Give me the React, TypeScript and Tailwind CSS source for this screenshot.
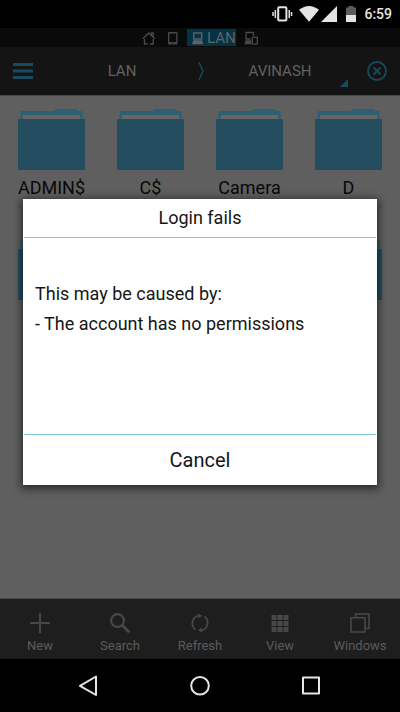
import type { ReactNode } from "react";

function Folder() {
  return (
    <svg viewBox="0 0 67 61" className="h-[61px] w-[67px]" aria-hidden="true">
      <path d="M2.500 11V3.200q0-1.200 1.200-1.200H36q.5-2 2-2h20q1.500 0 2 2h3.500q1.200 0 1.200 1.200V11z" fill="#2b6173" />
      <path d="M4.500 11 5 6h57l.5 5z" fill="#666" />
      <rect x="0" y="10" width="67" height="51" rx="1" fill="#244e60" />
    </svg>
  );
}

const namedFolders = ["ADMIN$", "C$", "Camera", "D"];
const coveredFolders = [5, 6, 7, 8];

function StatusBar() {
  return (
    <div className="flex h-7 items-center bg-black pr-2 text-sm font-medium text-[#e4e4e4]">
      <svg viewBox="0 0 86 20" className="ml-auto h-5 w-[86px]" fill="#e4e4e4" aria-hidden="true">
        <rect x="6.200" y="3.200" width="8.200" height="13.400" rx="1" fill="none" stroke="#e4e4e4" strokeWidth="2" />
        <path d="M.3 8h1.500v4H.3zM2.600 6h1.500v8H2.600zM16.500 6H18v8h-1.500zM18.800 8h1.500v4h-1.500z" />
        <path d="M27 5.800q10-7.600 20 0L37 17.800z" />
        <path d="M65 2v16H49z" />
        <path d="M74 3.500h2.500V2h5v1.500H84V12H74z" fill="#5c5c5c" />
        <path d="M74 11h10v7H74z" />
      </svg>
      <span className="ml-[6px] leading-7">6:59</span>
    </div>
  );
}

function LocationTabs() {
  return (
    <nav className="flex h-[19px] items-center justify-center bg-[#0a0a0a] text-[#494949]">
      <button type="button" aria-label="Home" className="w-[25px]">
        <svg viewBox="0 0 14 14" className="h-[14px] w-[14px]" fill="none" stroke="currentColor" strokeWidth="1.300" aria-hidden="true">
          <path d="M.8 7.800 6.800 2l6 5.800M2.500 8v5h3.200M8 13h3.200V8M9.500 4V2h1.800v3.500" />
        </svg>
      </button>
      <button type="button" aria-label="Device" className="w-5">
        <svg viewBox="0 0 12 14" className="h-[14px] w-3" aria-hidden="true">
          <path
            d="M2 1h7.500q1 0 1 1v10.500q0 1-1 1H2q-1 0-1-1V2q0-1 1-1zm.3 1.400v8.600h6.900V2.400zM5 11.700v.9h1.500v-.9z"
            fill="currentColor"
            fillRule="evenodd"
          />
        </svg>
      </button>
      <button type="button" className="flex h-[17px] w-[49px] items-center gap-[3px] bg-[#023346] pl-1 text-[15px] leading-4 text-[#626262]">
        <svg viewBox="0 0 13 14" className="h-[14px] w-[13px] shrink-0" fill="none" stroke="currentColor" strokeWidth="1.400" aria-hidden="true">
          <path d="M2.700 8V2h8v6z" />
          <path d="M2.200 9.300h9l1.100 3.900H1.100z" fill="currentColor" stroke="none" />
        </svg>
        LAN
      </button>
      <button type="button" aria-label="All locations" className="ml-2 w-[14px]">
        <svg viewBox="0 0 14 14" className="h-[14px] w-[14px]" fill="none" stroke="currentColor" strokeWidth="1.300" aria-hidden="true">
          <path d="M6.500 8H2V1.500h7.500V5" />
          <path d="M1.500 9.200h5.700v4H.5z" fill="currentColor" stroke="none" />
          <rect x="8.300" y="6.200" width="5" height="7" rx=".5" />
        </svg>
      </button>
    </nav>
  );
}

function PathBar() {
  return (
    <header className="flex h-12 items-center bg-[#141414] text-[15px] text-[#616161]">
      <button type="button" aria-label="Menu" className="w-[46px] pl-[13px]">
        <svg viewBox="0 0 20 16" className="h-4 w-5" fill="#164b60" aria-hidden="true">
          <path d="M0 0h20v3H0zM0 6.500h20v3H0zM0 13h20v3H0z" />
        </svg>
      </button>
      <button type="button" className="flex-1">LAN</button>
      <svg viewBox="0 0 6 18" className="h-[18px] w-[6px]" fill="none" stroke="#164b60" strokeWidth="1.400" aria-hidden="true">
        <path d="M1 .3 5 9 1 17.700" />
      </svg>
      <button type="button" className="relative h-12 flex-1">
        AVINASH
        <svg viewBox="0 0 8 8" className="absolute right-2 bottom-2 h-2 w-2" fill="#164b60" aria-hidden="true">
          <path d="M8 0v8H0z" />
        </svg>
      </button>
      <button type="button" aria-label="Close window" className="w-11 pl-[11px]">
        <svg viewBox="0 0 20 20" className="h-5 w-5" fill="none" stroke="#164b60" strokeWidth="1.800" aria-hidden="true">
          <circle cx="10" cy="10" r="9" />
          <path d="m6.500 6.500 7 7m0-7-7 7" />
        </svg>
      </button>
    </header>
  );
}

function ToolButton({ label, children }: { label: string; children: ReactNode }) {
  return (
    <button type="button" className="flex flex-col items-center pt-[14px] text-[13px] leading-[26px] text-[#5b5b5b]">
      <svg viewBox="0 0 20 20" className="h-5 w-5 text-[#484848]" fill="none" stroke="currentColor" strokeWidth="2" aria-hidden="true">
        {children}
      </svg>
      {label}
    </button>
  );
}

function Toolbar() {
  return (
    <footer className="grid h-[60px] grid-cols-5 bg-[#1e1e1e]">
      <ToolButton label="New">
        <path d="M10 0v20M0 10h20" />
      </ToolButton>
      <ToolButton label="Search">
        <circle cx="7.500" cy="7.500" r="6.400" strokeWidth="2.200" />
        <path d="m12 12 7.300 7.300" strokeWidth="3" />
      </ToolButton>
      <ToolButton label="Refresh">
        <path d="M5.500 16.600A8 8 0 0 1 8.500 2.500M14.500 3.400a8 8 0 0 1-3 14.100" strokeWidth="1.700" />
        <path d="m7.500.3 4.500 2.400-3.500 2.800zM12.500 19.700 8 17.300l3.500-2.800z" fill="currentColor" stroke="none" />
      </ToolButton>
      <ToolButton label="View">
        <path d="M1.500 2h5v5h-5zm6 0h5v5h-5zm6 0h5v5h-5zm-12 6h5v5h-5zm6 0h5v5h-5zm6 0h5v5h-5zm-12 6h5v5h-5zm6 0h5v5h-5zm6 0h5v5h-5z" fill="currentColor" stroke="none" />
      </ToolButton>
      <ToolButton label="Windows">
        <path d="M1 4.700h14V19H1zM5.500 4.700V1H19v14.500h-4" strokeWidth="1.600" />
      </ToolButton>
    </footer>
  );
}

function NavigationBar() {
  return (
    <nav className="flex h-[53px] items-center justify-center gap-[90px] bg-black text-[#e6e6e6]">
      <button type="button" aria-label="Back">
        <svg viewBox="0 0 22 22" className="h-[22px] w-[22px]" fill="none" stroke="currentColor" strokeWidth="2" strokeLinejoin="round" aria-hidden="true">
          <path d="M18 1.500v18.500L2 10.800z" />
        </svg>
      </button>
      <button type="button" aria-label="Home screen">
        <svg viewBox="0 0 20 20" className="h-5 w-5" fill="none" stroke="currentColor" strokeWidth="2" aria-hidden="true">
          <circle cx="10" cy="9.800" r="8.800" />
        </svg>
      </button>
      <button type="button" aria-label="Recent apps">
        <svg viewBox="0 0 22 22" className="h-[22px] w-[22px]" fill="none" stroke="currentColor" strokeWidth="2" strokeLinejoin="round" aria-hidden="true">
          <path d="M3 2.500h16v16H3z" />
        </svg>
      </button>
    </nav>
  );
}

function LoginDialog() {
  return (
    <section
      role="dialog"
      aria-labelledby="dialog-title"
      className="absolute inset-x-[23px] top-[199px] flex h-[286px] flex-col bg-white px-px text-lg text-[#161616] shadow-[0_2px_8px_2px_rgba(0,0,0,0.55)]"
    >
      <h1 id="dialog-title" className="h-[39px] border-b border-[#7cc9e4] text-center leading-[38px]">
        Login fails
      </h1>
      <div className="flex-1 px-[11px] pt-[41px] leading-[30px]">
        <p>This may be caused by:</p>
        <p>- The account has no permissions</p>
      </div>
      <button type="button" className="h-[51px] border-t border-[#7cc9e4] text-xl">
        Cancel
      </button>
    </section>
  );
}

export default function App() {
  return (
    <div className="relative flex min-h-screen flex-col bg-black font-[Roboto,sans-serif]">
      <StatusBar />
      <LocationTabs />
      <PathBar />
      <main className="grid flex-1 grid-cols-4 content-start gap-y-[37px] border-y border-y-[#484848] bg-[#5f5f5f] px-[2px] pt-[13px]">
        {namedFolders.map((name) => (
          <button key={name} type="button" className="flex flex-col items-center gap-1">
            <Folder />
            <span className="text-lg leading-7 text-[#090909]">{name}</span>
          </button>
        ))}
        {coveredFolders.map((position) => (
          <button key={position} type="button" aria-label={`Folder ${position}`} className="flex flex-col items-center">
            <Folder />
          </button>
        ))}
      </main>
      <Toolbar />
      <NavigationBar />
      <LoginDialog />
    </div>
  );
}
